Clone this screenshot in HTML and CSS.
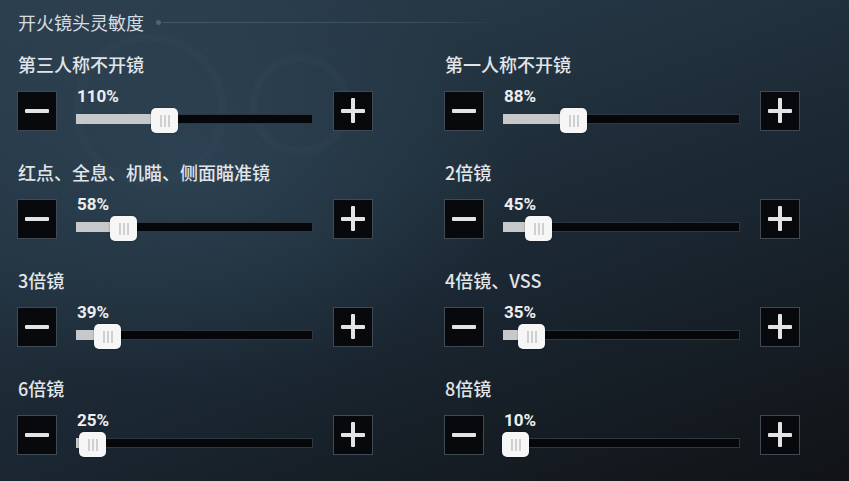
FILE: index.html
```html
<!DOCTYPE html>
<html lang="zh-CN">
<head>
<meta charset="utf-8">
<title>开火镜头灵敏度</title>
<link rel="stylesheet" href="styles.css">
</head>
<body>
<div class="page">
  <div class="header">
    <span class="title">开火镜头灵敏度</span>
    <span class="dot"></span>
    <span class="line"></span>
  </div>
  <div class="grid">
    <div class="setting">
      <div class="label">第三人称不开镜</div>
      <div class="controls">
        <div class="btn minus"></div>
        <div class="slider">
          <div class="pct">110%</div>
          <div class="track"><div class="fill" style="width:84px"></div><div class="thumb" style="left:74px"><i></i><i></i><i></i></div></div>
        </div>
        <div class="btn plus"></div>
      </div>
    </div>
    <div class="setting">
      <div class="label">第一人称不开镜</div>
      <div class="controls">
        <div class="btn minus"></div>
        <div class="slider">
          <div class="pct">88%</div>
          <div class="track"><div class="fill" style="width:66px"></div><div class="thumb" style="left:56px"><i></i><i></i><i></i></div></div>
        </div>
        <div class="btn plus"></div>
      </div>
    </div>
    <div class="setting">
      <div class="label">红点、全息、机瞄、侧面瞄准镜</div>
      <div class="controls">
        <div class="btn minus"></div>
        <div class="slider">
          <div class="pct">58%</div>
          <div class="track"><div class="fill" style="width:43px"></div><div class="thumb" style="left:33px"><i></i><i></i><i></i></div></div>
        </div>
        <div class="btn plus"></div>
      </div>
    </div>
    <div class="setting">
      <div class="label">2倍镜</div>
      <div class="controls">
        <div class="btn minus"></div>
        <div class="slider">
          <div class="pct">45%</div>
          <div class="track"><div class="fill" style="width:31px"></div><div class="thumb" style="left:21px"><i></i><i></i><i></i></div></div>
        </div>
        <div class="btn plus"></div>
      </div>
    </div>
    <div class="setting">
      <div class="label">3倍镜</div>
      <div class="controls">
        <div class="btn minus"></div>
        <div class="slider">
          <div class="pct">39%</div>
          <div class="track"><div class="fill" style="width:27px"></div><div class="thumb" style="left:17px"><i></i><i></i><i></i></div></div>
        </div>
        <div class="btn plus"></div>
      </div>
    </div>
    <div class="setting">
      <div class="label">4倍镜、VSS</div>
      <div class="controls">
        <div class="btn minus"></div>
        <div class="slider">
          <div class="pct">35%</div>
          <div class="track"><div class="fill" style="width:24px"></div><div class="thumb" style="left:14px"><i></i><i></i><i></i></div></div>
        </div>
        <div class="btn plus"></div>
      </div>
    </div>
    <div class="setting">
      <div class="label">6倍镜</div>
      <div class="controls">
        <div class="btn minus"></div>
        <div class="slider">
          <div class="pct">25%</div>
          <div class="track"><div class="fill" style="width:12px"></div><div class="thumb" style="left:2px"><i></i><i></i><i></i></div></div>
        </div>
        <div class="btn plus"></div>
      </div>
    </div>
    <div class="setting">
      <div class="label">8倍镜</div>
      <div class="controls">
        <div class="btn minus"></div>
        <div class="slider">
          <div class="pct">10%</div>
          <div class="track"><div class="fill" style="width:8px"></div><div class="thumb" style="left:-2px"><i></i><i></i><i></i></div></div>
        </div>
        <div class="btn plus"></div>
      </div>
    </div>
  </div>
</div>
</body>
</html>
```
FILE: styles.css
```css
* { box-sizing: border-box; }
html, body {
  margin: 0;
  padding: 0;
  width: 849px;
  height: 481px;
  overflow: hidden;
}
body {
  font-family: "Noto Sans", "Noto Sans CJK SC", sans-serif;
  color: #dfe3e7;
  background:
    radial-gradient(circle at 300px 105px, transparent 42px, rgba(150,180,200,0.022) 43px, rgba(150,180,200,0.022) 50px, transparent 51px),
    radial-gradient(circle at 150px 110px, transparent 68px, rgba(150,180,200,0.02) 69px, rgba(150,180,200,0.02) 76px, transparent 77px),
    radial-gradient(ellipse 420px 300px at 200px 170px, rgba(60,90,112,0.35), transparent 75%),
    linear-gradient(160deg, #2c3f4f 0%, #22323f 35%, #1a2631 60%, #141a20 85%, #111316 100%);
}
.page {
  padding: 12px 0 0 17px;
}
.header {
  display: flex;
  align-items: center;
  height: 20px;
  padding-left: 1px;
}
.title {
  font-family: "Noto Sans CJK SC", sans-serif;
  font-size: 18px;
  line-height: 20px;
  font-weight: 400;
  color: #d6dce1;
}
.dot {
  width: 5px;
  height: 5px;
  border-radius: 50%;
  background: #4c6475;
  margin-left: 12px;
}
.line {
  width: 340px;
  height: 1px;
  margin-left: 2px;
  background: linear-gradient(90deg, rgba(80,105,122,0.6), rgba(80,105,122,0.45) 80%, rgba(80,105,122,0));
}
.grid {
  display: grid;
  grid-template-columns: 427px 1fr;
  row-gap: 31px;
  margin-top: 22px;
}
.label {
  font-family: "Noto Sans CJK SC", sans-serif;
  font-size: 18px;
  line-height: 20px;
  height: 20px;
  font-weight: 500;
  color: #e1e5e9;
  padding-left: 1px;
  white-space: nowrap;
}
.controls {
  display: flex;
  align-items: flex-start;
  margin-top: 17px;
}
.btn {
  position: relative;
  width: 40px;
  height: 40px;
  background: #07090c;
  border: 1px solid #3f4a54;
  flex: none;
}
.btn::before, .btn::after {
  content: "";
  position: absolute;
  background: #e4e4e4;
  border-radius: 1px;
}
.btn::before {
  left: 7px;
  right: 7px;
  top: 17px;
  height: 4px;
}
.minus::after { display: none; }
.plus::after {
  top: 6px;
  bottom: 7px;
  left: 17px;
  width: 4px;
}
.slider {
  width: 237px;
  margin: 0 20px 0 19px;
  flex: none;
}
.pct {
  font-family: "Roboto", "Noto Sans", sans-serif;
  font-size: 17px;
  font-weight: 700;
  line-height: 17px;
  height: 23px;
  margin-top: -3px;
  padding-left: 1px;
  color: #eceef0;
}
.track {
  position: relative;
  height: 10px;
  margin-top: 3px;
  background: #05070a;
  border: 1px solid #2f3840;
}
.fill {
  position: absolute;
  left: -1px;
  top: -1px;
  bottom: -1px;
  background: #c6c8ca;
}
.thumb {
  position: absolute;
  top: -7px;
  width: 27px;
  height: 25px;
  background: #f6f6f6;
  border-radius: 5px;
  display: flex;
  justify-content: center;
  align-items: center;
  gap: 2px;
  box-shadow: 0 0 2px rgba(0,0,0,0.4);
}
.thumb i {
  display: block;
  width: 2px;
  height: 12px;
  background: #cfcfcf;
}
```
